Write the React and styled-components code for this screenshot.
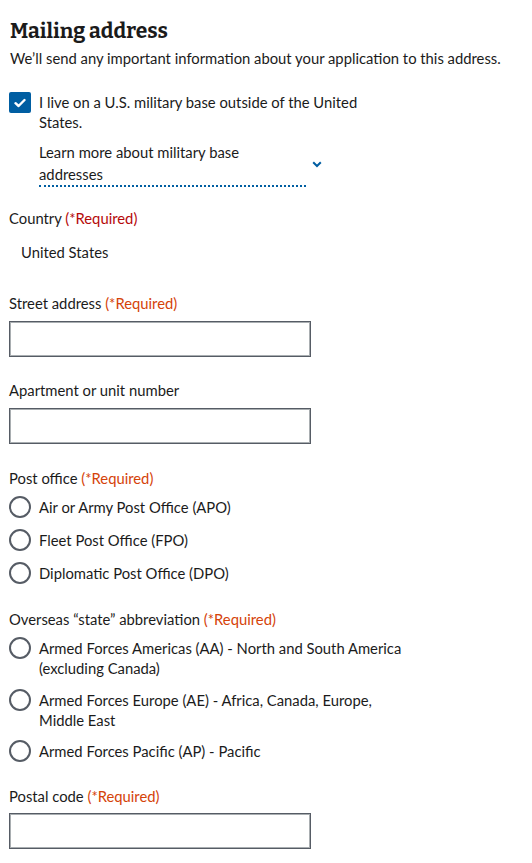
import React from 'react'
import styled, {createGlobalStyle} from 'styled-components'

const GlobalStyle = createGlobalStyle`
    body {
      margin: 0;
      background: #fff;
      color: #1b1b1b;
      font-family: "Source Sans Pro", Lato, "Liberation Sans", sans-serif;
      font-size: 14.8px;
      line-height: 20px;
    }
    * { box-sizing: border-box; }
`

const Page = styled.form`
    padding: 18px 9px 20px 9px;
`

const Title = styled.h2`
    margin: 0 0 0 1px;
    font-family: Bitter, "Liberation Serif", serif;
    font-weight: 700;
    font-size: 21px;
    line-height: 26px;
`

const Intro = styled.p`
    margin: 4px 0 0 1px;
`

const CheckRow = styled.label`
    display: flex;
    align-items: flex-start;
    gap: 8px;
    margin-top: 24px;
`

const CheckBox = styled.span`
    flex: none;
    width: 22px;
    height: 21px;
    border-radius: 2px;
    background: #005ea2;
    display: flex;
    align-items: center;
    justify-content: center;
`

const CheckText = styled.span`
    max-width: 330px;
`

const InfoRow = styled.div`
    display: flex;
    align-items: center;
    gap: 6px;
    margin: 9px 0 0 30px;
`

const InfoTrigger = styled.div`
    width: 267px;
    line-height: 22px;
    border-bottom: 2px dotted #005ea2;
`

const Label = styled.div`
    margin-top: ${p => p.$top}px;
`

const Required = styled.span`
    color: ${p => (p.$dark ? '#b50909' : '#d54309')};
`

const StaticValue = styled.div`
    margin: 14px 0 0 12px;
`

const TextInput = styled.input`
    display: block;
    width: 302px;
    height: 36px;
    margin-top: ${p => p.$top ?? 8}px;
    border: 1px solid #565c65;
    box-shadow: inset 0 0 0 1px #a9aeb1;
    background: #fff;
    font: inherit;
`

const Fieldset = styled.fieldset`
    margin: ${p => p.$top}px 0 0 0;
    padding: 0;
    border: 0;
`

const Legend = styled.legend`
    padding: 0;
`

const RadioRow = styled.label`
    display: flex;
    align-items: flex-start;
    gap: 8px;
    margin-top: ${p => p.$gap}px;
    max-width: 400px;
`

const RadioCircle = styled.span`
    flex: none;
    width: 22px;
    height: 22px;
    margin-top: -1px;
    border-radius: 50%;
    border: 2px solid #565c65;
    background: #fff;
`

const Check = () => (
    <svg width="12" height="10" viewBox="0 0 12 10">
        <path d="M1.5 5.2 L4.6 8 L10.5 2" fill="none" stroke="#fff" strokeWidth="2.4" strokeLinecap="round" strokeLinejoin="round" />
    </svg>
)

const Chevron = () => (
    <svg width="10" height="7" viewBox="0 0 10 7">
        <path d="M1.2 1.2 L5 5 L8.8 1.2" fill="none" stroke="#005ea2" strokeWidth="2" />
    </svg>
)

const RadioGroup = ({legend, top, options, gap}) => (
    <Fieldset $top={top}>
        <Legend>{legend} <Required>(*Required)</Required></Legend>
        {options.map((o, i) => (
            <RadioRow key={o} $gap={i === 0 ? 9 : gap}>
                <RadioCircle />
                <span>{o}</span>
            </RadioRow>
        ))}
    </Fieldset>
)

export default function App() {
    return (
        <Page>
            <GlobalStyle />
            <Title>Mailing address</Title>
            <Intro>We’ll send any important information about your application to this address.</Intro>

            <CheckRow>
                <CheckBox><Check /></CheckBox>
                <CheckText>I live on a U.S. military base outside of the United States.</CheckText>
            </CheckRow>
            <InfoRow>
                <InfoTrigger>Learn more about military base addresses</InfoTrigger>
                <Chevron />
            </InfoRow>

            <Label $top={21}>Country <Required $dark>(*Required)</Required></Label>
            <StaticValue>United States</StaticValue>

            <Label $top={31}>Street address <Required>(*Required)</Required></Label>
            <TextInput type="text" />

            <Label $top={23}>Apartment or unit number</Label>
            <TextInput type="text" />

            <RadioGroup
                legend="Post office"
                top={24}
                gap={12}
                options={[
                    'Air or Army Post Office (APO)',
                    'Fleet Post Office (FPO)',
                    'Diplomatic Post Office (DPO)',
                ]}
            />

            <RadioGroup
                legend="Overseas “state” abbreviation"
                top={25}
                gap={11.5}
                options={[
                    'Armed Forces Americas (AA) - North and South America (excluding Canada)',
                    'Armed Forces Europe (AE) - Africa, Canada, Europe, Middle East',
                    'Armed Forces Pacific (AP) - Pacific',
                ]}
            />

            <Label $top={24}>Postal code <Required>(*Required)</Required></Label>
            <TextInput type="text" $top={7} />
        </Page>
    )
}
